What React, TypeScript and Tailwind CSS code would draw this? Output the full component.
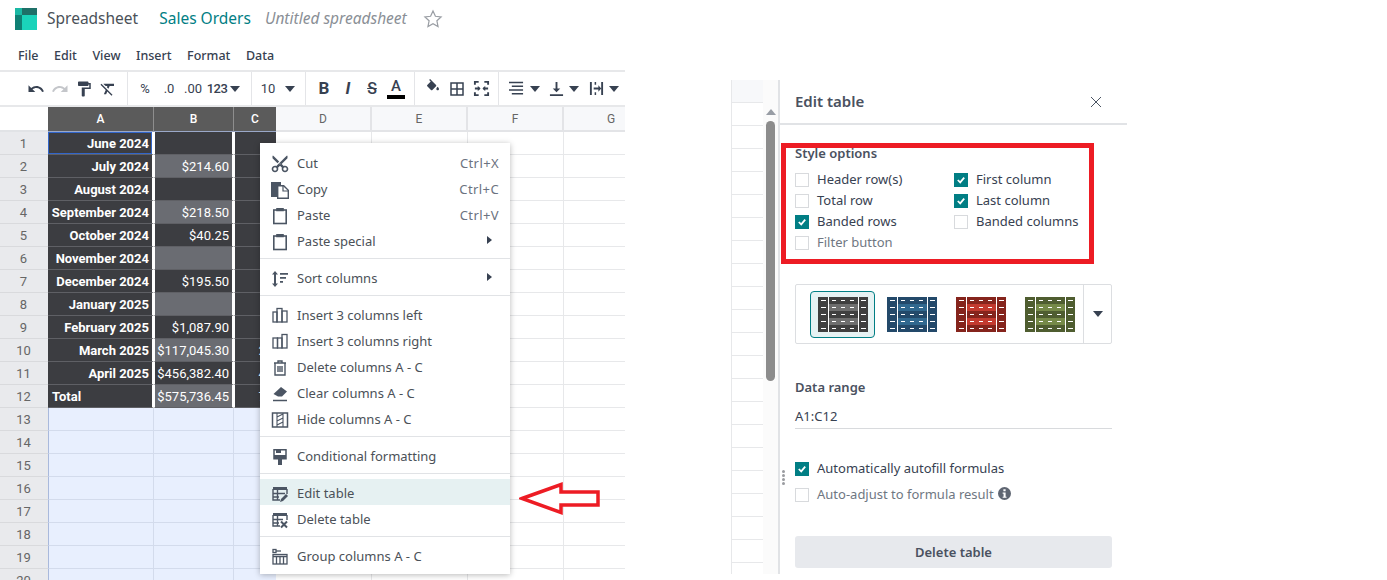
import type { ReactNode } from 'react';

const rows: [string, string, string][] = [
  ['June 2024', '', ''],
  ['July 2024', '$214.60', ''],
  ['August 2024', '', ''],
  ['September 2024', '$218.50', ''],
  ['October 2024', '$40.25', ''],
  ['November 2024', '', ''],
  ['December 2024', '$195.50', ''],
  ['January 2025', '', ''],
  ['February 2025', '$1,087.90', ''],
  ['March 2025', '$117,045.30', '20'],
  ['April 2025', '$456,382.40', '40'],
  ['Total', '$575,736.45', '70'],
];

const Ic = ({ d, size = 18, className = '' }: { d: string; size?: number; className?: string }) => (
  <svg viewBox="0 0 24 24" width={size} height={size} className={className} fill="currentColor">
    <path d={d} />
  </svg>
);

const Caret = ({ className = '' }: { className?: string }) => (
  <svg viewBox="0 0 10 6" width="10" height="6" className={className} fill="#374151">
    <path d="M0 0h10L5 6z" />
  </svg>
);

const TB = ({ w, children, className = '' }: { w: string; children: ReactNode; className?: string }) => (
  <div className={`flex items-center justify-center shrink-0 ${w} ${className}`}>{children}</div>
);

const Sep = () => <div className="w-px h-full bg-[#e4e5e8] shrink-0" />;

const Toolbar = () => (
  <div className="flex items-center h-[37px] shrink-0 border-y-2 border-[#e7e8ea] text-[#374151] font-['Roboto',sans-serif] text-[13px]">
    <div className="w-[24px] shrink-0" />
    <TB w="w-[24px]"><Ic d="M12.5 8c-2.65 0-5.05.99-6.9 2.6L2 7v9h9l-3.62-3.62c1.39-1.16 3.16-1.88 5.12-1.88 3.54 0 6.55 2.31 7.6 5.5l2.37-.78C21.08 11.03 17.15 8 12.5 8z" /></TB>
    <TB w="w-[24px]" className="text-[#c4c6ca]"><Ic d="M18.4 10.6C16.55 8.99 14.15 8 11.5 8c-4.65 0-8.58 3.03-9.96 7.22L3.9 16c1.05-3.19 4.05-5.5 7.6-5.5 1.95 0 3.73.72 5.12 1.88L13 16h9V7l-3.6 3.6z" /></TB>
    <TB w="w-[24px]"><Ic d="M18 4V3c0-.55-.45-1-1-1H5c-.55 0-1 .45-1 1v4c0 .55.45 1 1 1h12c.55 0 1-.45 1-1V6h1v4H9v11c0 .55.45 1 1 1h2c.55 0 1-.45 1-1v-9h8V4h-3z" /></TB>
    <TB w="w-[24px]"><Ic d="M3.27 5L2 6.27l6.97 6.97L6.5 19h3l1.57-3.66L16.73 21 18 19.73 3.55 5.27 3.27 5zM6 5v.18L8.82 8h2.4l-.72 1.68 2.1 2.1L14.21 8H20V5H6z" /></TB>
    <div className="w-[7px] shrink-0" />
    <Sep />
    <div className="w-[5px] shrink-0" />
    <TB w="w-[24px]">%</TB>
    <TB w="w-[24px]">.0</TB>
    <TB w="w-[24px]">.00</TB>
    <TB w="w-[24px]" className="font-medium tracking-[-0.5px]">123</TB>
    <TB w="w-[11px]"><Caret /></TB>
    <div className="w-[11px] shrink-0" />
    <Sep />
    <TB w="w-[32px]">10</TB>
    <TB w="w-[12px]"><Caret /></TB>
    <div className="w-[9px] shrink-0" />
    <Sep />
    <div className="w-[6px] shrink-0" />
    <TB w="w-[24px]" className="font-bold text-[17px]">B</TB>
    <TB w="w-[24px]" className="font-bold italic text-[17px]">I</TB>
    <TB w="w-[24px]" className="font-medium text-[16px] line-through">S</TB>
    <TB w="w-[24px]">
      <div className="flex flex-col items-center leading-none">
        <span className="font-medium text-[15px] leading-[15px]">A</span>
        <span className="w-[18px] h-[4px] bg-black mt-[1px]" />
      </div>
    </TB>
    <div className="w-[6px] shrink-0" />
    <Sep />
    <div className="w-[6px] shrink-0" />
    <TB w="w-[24px]" className="pb-[4px]"><Ic size={16} d="M16.56 8.94L7.62 0 6.21 1.41l2.38 2.38-5.15 5.15c-.59.59-.59 1.54 0 2.12l5.5 5.5c.29.29.68.44 1.06.44s.77-.15 1.06-.44l5.5-5.5c.59-.58.59-1.53 0-2.12zM19 11.5s-2 2.17-2 3.5c0 1.1.9 2 2 2s2-.9 2-2c0-1.33-2-3.5-2-3.5z" /></TB>
    <TB w="w-[24px]"><Ic d="M3 3v18h18V3H3zm8 16H5v-6h6v6zm0-8H5V5h6v6zm8 8h-6v-6h6v6zm0-8h-6V5h6v6z" /></TB>
    <TB w="w-[24px]">
      <svg viewBox="0 0 18 18" width="17" height="17" fill="none" stroke="currentColor" strokeWidth="2">
        <path d="M6 2H2v3M12 2h4v3M6 16H2v-3M12 16h4v-3M2 9h5M16 9h-5" />
        <path d="M5 7l2 2-2 2M13 7l-2 2 2 2" strokeWidth="1.4" />
      </svg>
    </TB>
    <div className="w-[5px] shrink-0" />
    <Sep />
    <div className="w-[6px] shrink-0" />
    <TB w="w-[22px]">
      <svg viewBox="0 0 16 16" width="15" height="15" stroke="currentColor" strokeWidth="1.6">
        <path d="M0 1.5h15M3 5.5h12M0 9.5h15M3 13.5h12" />
      </svg>
    </TB>
    <TB w="w-[15px]"><Caret /></TB>
    <div className="w-[4px] shrink-0" />
    <TB w="w-[20px]">
      <svg viewBox="0 0 16 16" width="15" height="15" fill="currentColor">
        <path d="M7 1h2v7h3l-4 4-4-4h3zM1 14h14v2H1z" />
      </svg>
    </TB>
    <TB w="w-[16px]"><Caret /></TB>
    <div className="w-[6px] shrink-0" />
    <TB w="w-[16px]">
      <svg viewBox="0 0 16 16" width="15" height="15" fill="currentColor">
        <path d="M1 1h2v14H1zM13 1h2v14h-2zM6 1h1.6v3H6zM6 12h1.6v3H6zM5 7h5V4.6L13 8l-3 3.4V9H5z" />
      </svg>
    </TB>
    <TB w="w-[20px]"><Caret /></TB>
  </div>
);

const colBorder = 'border-r border-[#e7e8ea]';

const Grid = () => (
  <div className="font-['Roboto',sans-serif] text-[13px] overflow-hidden flex-1">
    <div className="flex h-[25px] text-[12px] leading-[25px] text-center">
      <div className="w-[48px] shrink-0 bg-white border-b-2 border-[#e1e3e6]" />
      <div className="w-[106px] shrink-0 bg-[#5b5b5b] text-white font-medium border-r border-[#8e8e8e] border-b border-b-[#9aa8c8]">A</div>
      <div className="w-[80px] shrink-0 bg-[#5b5b5b] text-white font-medium border-r border-[#8e8e8e] border-b border-b-[#9aa8c8]">B</div>
      <div className="w-[42px] shrink-0 bg-[#5b5b5b] text-white font-medium border-b border-b-[#9aa8c8]">C</div>
      {['D', 'E', 'F', 'G'].map((c) => (
        <div key={c} className="w-[96px] shrink-0 bg-[#f7f8fa] text-[#666] border-r-2 border-b-2 border-[#e3e4e7]">{c}</div>
      ))}
    </div>
    {Array.from({ length: 20 }, (_, i) => {
      const r = rows[i];
      const band = i % 2 === 1;
      return (
        <div key={i} className="flex h-[23px] leading-[23px]">
          <div className="w-[48px] shrink-0 bg-[#e9eaed] text-[#666] text-center border-b border-[#d9dadd] pr-[1px]">{i + 1}</div>
          {r ? (
            <>
              <div className={`w-[106px] shrink-0 bg-[#3c3d41] text-white font-bold border-b border-[#5f6065] border-r-[2px] border-r-white ${i === 11 ? 'pl-[4px]' : 'text-right pr-[3px]'} ${i === 0 ? 'ring-1 ring-inset ring-[#3266ca]' : ''}`}>{r[0]}</div>
              <div className={`w-[80px] shrink-0 text-right text-white pr-[3px] pl-[1px] border-b border-[#5f6065] border-l border-r-[2px] border-l-white border-r-white ${band ? 'bg-[#6a6c72]' : 'bg-[#3c3d41]'}`}>{r[1]}</div>
              <div className="w-[42px] shrink-0 bg-[#3c3d41] text-white text-right pr-[3px] border-b border-[#5f6065] border-l-[1px] border-l-white">{r[2]}</div>
            </>
          ) : (
            <>
              <div className="w-[106px] shrink-0 bg-[#e8effe] border-b border-r border-[#d3dbec] border-l border-l-[#a9b9dc]" />
              <div className="w-[80px] shrink-0 bg-[#e8effe] border-b border-r border-[#d3dbec]" />
              <div className="w-[42px] shrink-0 bg-[#e8effe] border-b border-[#d3dbec]" />
            </>
          )}
          {[0, 1, 2, 3].map((c) => (
            <div key={c} className={`w-[96px] shrink-0 bg-white border-b ${colBorder}`} />
          ))}
        </div>
      );
    })}
  </div>
);

const mi = 'fill-none stroke-current';

const menuIcons: Record<string, ReactNode> = {
  cut: <Ic size={20} className="-rotate-90" d="M9.64 7.64c.23-.5.36-1.05.36-1.64 0-2.21-1.79-4-4-4S2 3.79 2 6s1.79 4 4 4c.59 0 1.14-.13 1.64-.36L10 12l-2.36 2.36C7.14 14.13 6.59 14 6 14c-2.21 0-4 1.79-4 4s1.79 4 4 4 4-1.79 4-4c0-.59-.13-1.14-.36-1.64L12 14l7 7h3v-1L9.64 7.64zM6 8c-1.1 0-2-.89-2-2s.9-2 2-2 2 .89 2 2-.9 2-2 2zm0 12c-1.1 0-2-.89-2-2s.9-2 2-2 2 .89 2 2-.9 2-2 2zm6-7.5c-.28 0-.5-.22-.5-.5s.22-.5.5-.5.5.22.5.5-.22.5-.5.5zM19 3l-6 6 2 2 7-7V3z" />,
  copy: (
    <svg viewBox="0 0 20 20" width="20" height="20">
      <path d="M1 2h10v3H7v12H1z" fill="currentColor" />
      <path d="M7.7 5.7h6l4.6 4.6v8h-10.600z" className={mi} strokeWidth="1.4" />
      <path d="M13 6v5h5" className={mi} strokeWidth="1.2" />
    </svg>
  ),
  paste: (
    <svg viewBox="0 0 20 20" width="20" height="20" className={mi} strokeWidth="1.6">
      <rect x="3.800" y="4" width="12.400" height="13.500" />
      <path d="M7 4.500V2.800h6v1.700z" fill="currentColor" />
    </svg>
  ),
  sort: (
    <svg viewBox="0 0 20 20" width="20" height="20" fill="currentColor">
      <path d="M5 2l3 3.500H6v9h2L5 18l-3-3.500h2v-9H2zM10 4h8v1.800h-8zM10 8h6v1.800h-6zM10 12h3v1.800h-3z" />
    </svg>
  ),
  insL: (
    <svg viewBox="0 0 20 20" width="20" height="20" className={mi} strokeWidth="1.300">
      <rect x="3" y="6" width="4" height="10" />
      <rect x="7" y="2.500" width="5" height="13.500" />
      <rect x="12" y="5" width="5" height="11" />
    </svg>
  ),
  insR: (
    <svg viewBox="0 0 20 20" width="20" height="20" className={mi} strokeWidth="1.300">
      <rect x="3" y="6" width="4.500" height="10" />
      <rect x="7.500" y="6" width="4.500" height="10" />
      <rect x="12" y="2.500" width="5" height="13.500" />
    </svg>
  ),
  trash: (
    <svg viewBox="0 0 20 20" width="20" height="20" className={mi} strokeWidth="1.400">
      <path d="M4 5h12M8 5V3h4v2M5 5v12h10V5M8 8v6M10 8v6M12 8v6" />
    </svg>
  ),
  eraser: (
    <svg viewBox="0 0 20 20" width="20" height="20">
      <path d="M11 3l6 4.500-5 5H8L3.500 10z" fill="currentColor" />
      <path d="M3 16.500h14" className={mi} strokeWidth="1.500" />
    </svg>
  ),
  hide: (
    <svg viewBox="0 0 20 20" width="20" height="20" className={mi} strokeWidth="1.500">
      <rect x="2.500" y="3" width="15" height="14" />
      <path d="M7 3v14M13 3v14M7 7l6-3M7 11l6-3M7 15l6-3" strokeWidth="1.100" />
    </svg>
  ),
  cond: (
    <svg viewBox="0 0 20 20" width="20" height="20">
      <path d="M4 2.800h12v9H4z" className={mi} strokeWidth="1.500" />
      <path d="M4 8h12v4H4zM8 12h4v6H8zM6 3h5v3H6z" fill="currentColor" />
    </svg>
  ),
  edit: (
    <svg viewBox="0 0 20 20" width="20" height="20">
      <path d="M3 3h14v3H3z" fill="currentColor" />
      <path d="M3 5v11h7M17 5v5M3 9.500h12M3 13h6M7.500 5v11" className={mi} strokeWidth="1.400" />
      <path d="M10 18l1-3 5-5 2 2-5 5z" fill="currentColor" />
    </svg>
  ),
  del: (
    <svg viewBox="0 0 20 20" width="20" height="20">
      <path d="M3 3h14v3H3z" fill="currentColor" />
      <path d="M3 5v11h7M17 5v5M3 9.500h10M3 13h6M7.500 5v11" className={mi} strokeWidth="1.400" />
      <path d="M11 11.500l6 6M17 11.500l-6 6" className={mi} strokeWidth="2" />
    </svg>
  ),
  group: (
    <svg viewBox="0 0 20 20" width="20" height="20" className={mi} strokeWidth="1.300">
      <rect x="3" y="2.500" width="3" height="3" />
      <path d="M6 4h5" />
      <rect x="3" y="7.500" width="14" height="9.500" />
      <path d="M3 9.500h14M6.500 9.500V17M10 9.500V17M13.500 9.500V17" />
    </svg>
  ),
};

const Item = ({ icon, label, hint, sub, active }: { icon: string; label: string; hint?: string; sub?: boolean; active?: boolean }) => (
  <div className={`flex items-center h-[26px] pt-[4px] pr-[11px] pl-[9px] ${active ? 'bg-[#e6f1f2]' : ''}`}>
    <span className="w-[21px] flex justify-center text-[#4b5563] shrink-0">{menuIcons[icon]}</span>
    <span className="ml-[7px] flex-1">{label}</span>
    {hint && <span className="text-[#6b7280] tracking-[0.4px]">{hint}</span>}
    {sub && (
      <svg viewBox="0 0 5 8" width="5" height="8" className="mr-[7px] mb-[4px]" fill="#374151">
        <path d="M0 0l5 4-5 4z" />
      </svg>
    )}
  </div>
);

const Divider = () => <div className="h-px bg-[#e1e3e6] my-[5px]" />;

const ContextMenu = () => (
  <div className="absolute left-[260px] top-[143px] w-[250px] h-[431px] bg-white shadow-[0_1px_6px_rgba(0,0,0,0.28)] pt-[6px] text-[13px] text-[#4b5158]">
    <Item icon="cut" label="Cut" hint="Ctrl+X" />
    <Item icon="copy" label="Copy" hint="Ctrl+C" />
    <Item icon="paste" label="Paste" hint="Ctrl+V" />
    <Item icon="paste" label="Paste special" sub />
    <Divider />
    <Item icon="sort" label="Sort columns" sub />
    <Divider />
    <Item icon="insL" label="Insert 3 columns left" />
    <Item icon="insR" label="Insert 3 columns right" />
    <Item icon="trash" label="Delete columns A - C" />
    <Item icon="eraser" label="Clear columns A - C" />
    <Item icon="hide" label="Hide columns A - C" />
    <Divider />
    <Item icon="cond" label="Conditional formatting" />
    <Divider />
    <Item icon="edit" label="Edit table" active />
    <Item icon="del" label="Delete table" />
    <Divider />
    <Item icon="group" label="Group columns A - C" />
  </div>
);

const Check = ({ on, disabled, label, extra }: { on?: boolean; disabled?: boolean; label: string; extra?: ReactNode }) => (
  <div className={`flex items-center h-[21px] ${disabled ? 'text-[#6f7782]' : 'text-[#374151]'}`}>
    {on ? (
      <span className="w-[14px] h-[14px] bg-[#017e84] flex items-center justify-center shrink-0">
        <svg viewBox="0 0 10 10" width="8" height="8" fill="none" stroke="white" strokeWidth="2.200">
          <path d="M1 5l3 3 5-6" />
        </svg>
      </span>
    ) : (
      <span className="w-[14px] h-[14px] border border-[#d8dadd] bg-white shrink-0" />
    )}
    <span className="ml-[8px]">{label}</span>
    {extra}
  </div>
);

const Thumb = ({ dark, light }: { dark: string; light: string }) => (
  <svg viewBox="0 0 50 35" width="50" height="35" className="shrink-0">
    <rect width="50" height="35" fill={dark} />
    <rect x="11" y="7" width="29" height="7" fill={light} />
    <rect x="11" y="21" width="29" height="7" fill={light} />
    <path d="M10.500 0v35M40.500 0v35" stroke="white" strokeWidth="1" />
    {[3, 10, 17, 24, 31].map((y) => (
      <path key={y} d={`M3 ${y + 0.5}h5M14 ${y + 0.5}h4M23 ${y + 0.5}h4M32 ${y + 0.5}h4M43 ${y + 0.5}h5`} stroke="white" strokeWidth="1" />
    ))}
  </svg>
);

const EditPanel = () => (
  <div className="relative w-[349px] border-l-2 border-[#e1e3e6] bg-white text-[13px] text-[#374151]">
    <div className="flex items-center justify-between h-[45px] pl-[15px] pr-[25px] border-b-2 border-[#e1e3e6]">
      <span className="text-[15px] font-semibold text-[#4a5160]">Edit table</span>
      <svg viewBox="0 0 12 12" width="12" height="12" stroke="#4b5563" strokeWidth="1">
        <path d="M1 1l10 10M11 1L1 11" />
      </svg>
    </div>
    <div className="pl-[15px] pr-[15px]">
      <div className="mt-[19px] font-semibold text-[#4a5160] leading-[18px]">Style options</div>
      <div className="grid grid-cols-[159px_1fr] mt-[7px]">
        <Check label="Header row(s)" />
        <Check on label="First column" />
        <Check label="Total row" />
        <Check on label="Last column" />
        <Check on label="Banded rows" />
        <Check label="Banded columns" />
        <Check disabled label="Filter button" />
      </div>
      <div className="flex items-center h-[60px] mt-[31px] border border-[#dcdee1] rounded-[2px]">
        <div className="flex-1 flex gap-[4px] pl-[14px]">
          <div className="w-[65px] h-[47px] flex items-center justify-center bg-[#e6f2f3] border border-[#017e84] rounded-[4px]">
            <Thumb dark="#3f3f3f" light="#6e6e6e" />
          </div>
          <div className="w-[65px] h-[47px] flex items-center justify-center"><Thumb dark="#23496a" light="#30688f" /></div>
          <div className="w-[65px] h-[47px] flex items-center justify-center"><Thumb dark="#85241c" light="#c33a2f" /></div>
          <div className="w-[65px] h-[47px] flex items-center justify-center"><Thumb dark="#4f5d30" light="#768a48" /></div>
        </div>
        <div className="w-[28px] h-full border-l border-[#dcdee1] flex items-center justify-center">
          <Caret />
        </div>
      </div>
      <div className="mt-[34px] font-semibold text-[#4a5160] leading-[18px]">Data range</div>
      <div className="mt-[9px] h-[24px] leading-[22px] border-b border-[#d8dadd] text-[#374151]">A1:C12</div>
      <div className="mt-[29px]">
        <Check on label="Automatically autofill formulas" />
      </div>
      <div className="mt-[5px]">
        <Check
          disabled
          label="Auto-adjust to formula result"
          extra={
            <svg viewBox="0 0 14 14" width="13" height="13" className="ml-[4px] mb-[2px]" fill="#5f6672">
              <path d="M7 0a7 7 0 1 0 0 14A7 7 0 0 0 7 0zM5.800 2.500h2.400v2.200H5.800zM5 6h3.200v4.500h1v1.200H5v-1.200h1V7.200H5z" fillRule="evenodd" />
            </svg>
          }
        />
      </div>
      <div className="mt-[31px] h-[32px] pt-[1px] flex items-center justify-center bg-[#e7e9ed] rounded-[3px] font-semibold text-[#4a5160]">
        Delete table
      </div>
    </div>
    {/* annotation box */}
    <div className="absolute left-[1px] top-[63px] w-[313px] h-[121px] border-[5px] border-[#ed1c24]" />
    <div className="absolute left-[2px] top-[390px] flex flex-col gap-[1px]">
      {[0, 1, 2, 3].map((d) => (
        <span key={d} className="w-[3px] h-[3px] rounded-full bg-[#9a9ca0]" />
      ))}
    </div>
  </div>
);

const SideStrip = () => (
  <div className="flex h-full">
    <div className="w-[32px] border-l border-[#e7e8ea] overflow-hidden">
      <div className="h-[23px] bg-[#f7f8fa] border-b border-[#e7e8ea]" />
      {Array.from({ length: 20 }, (_, i) => (
        <div key={i} className="h-[23px] border-b border-[#e7e8ea]" />
      ))}
    </div>
    <div className="w-[15px] bg-[#fbfbfb] flex flex-col items-center pt-[29px]">
      <Caret className="rotate-180 opacity-50 mb-[6px]" />
      <div className="w-[9px] h-[260px] rounded-full bg-[#8c8c8c]" />
    </div>
  </div>
);

export default function App() {
  return (
    <div className="relative flex w-[1387px] h-[580px] overflow-hidden bg-white font-['Noto_Sans',sans-serif]">
      <div className="w-[625px] h-[580px] flex flex-col shrink-0">
        <div className="flex items-center h-[38px] pl-[15px] shrink-0">
          <svg viewBox="0 0 22 22" width="22" height="22">
            <rect width="22" height="22" fill="#1ad3ba" />
            <rect width="7" height="22" fill="#0f8074" />
            <rect width="7" height="7" fill="#1ab8a4" />
            <rect x="7" width="15" height="7" fill="#1e7068" />
          </svg>
          <span className="ml-[10px] text-[15.5px] text-[#4b5158]">Spreadsheet</span>
          <span className="ml-[21px] text-[15.5px] text-[#017e84]">Sales Orders</span>
          <span className="ml-[14px] text-[15.5px] italic text-[#8a8f96]">Untitled spreadsheet</span>
          <svg viewBox="0 0 24 24" width="20" height="20" className="ml-[16px]" fill="none" stroke="#9a9ea4" strokeWidth="1.500">
            <path d="M12 2.500l2.900 6.200 6.800.8-5 4.700 1.300 6.800-6-3.400-6 3.400 1.300-6.800-5-4.700 6.800-.8z" />
          </svg>
        </div>
        <div className="flex items-center h-[32px] pl-[18px] pt-[4px] shrink-0 text-[12.5px] font-medium text-[#374151] gap-[15.5px]">
          <span>File</span>
          <span>Edit</span>
          <span>View</span>
          <span>Insert</span>
          <span>Format</span>
          <span>Data</span>
        </div>
        <Toolbar />
        <Grid />
      </div>
      <div className="ml-[106px] mt-[80px] h-[494px] flex">
        <SideStrip />
        <EditPanel />
      </div>
      <ContextMenu />
      {/* annotation arrow */}
      <svg viewBox="0 0 82 33" width="82" height="33" className="absolute left-[519px] top-[482px]" fill="white" stroke="#ed1c24" strokeWidth="3.500">
        <path d="M3 16.500L42 2.500v7.500h37v13H42v7.500z" />
      </svg>
    </div>
  );
}
